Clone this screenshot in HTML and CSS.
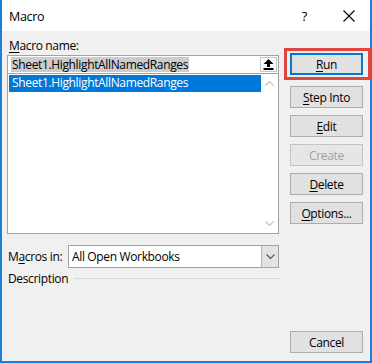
FILE: index.html
```html
<!DOCTYPE html>
<html lang="en">
<head>
    <meta charset="UTF-8">
    <meta name="viewport" content="width=device-width, initial-scale=1.0">
    <title>Macro</title>
    <link rel="stylesheet" href="styles.css">
</head>
<body>
    <div class="dialog">
        <div class="titlebar">
            <span class="title">Macro</span>
            <span class="help">?</span>
            <span class="close">
                <svg width="12" height="12" viewBox="0 0 12 12">
                    <path d="M0.5 0.5 L11.5 11.5 M11.5 0.5 L0.5 11.5" stroke="#000" stroke-width="1.1" fill="none"/>
                </svg>
            </span>
        </div>

        <div class="content">
            <div class="main">
                <div class="left">
                    <div class="label"><u>M</u>acro name:</div>

                    <div class="name-box">
                        <span class="name-sel">Sheet1.HighlightAllNamedRanges</span>
                        <span class="up-btn">
                            <svg width="11" height="11" viewBox="0 0 11 11">
                                <path d="M5.5 0 L10.5 5 L7 5 L7 8 L4 8 L4 5 L0.5 5 Z" fill="#000"/>
                                <rect x="0.5" y="9" width="10" height="2" fill="#000"/>
                            </svg>
                        </span>
                    </div>

                    <div class="list">
                        <div class="list-items">
                            <div class="item selected">Sheet1.HighlightAllNamedRanges</div>
                        </div>
                        <div class="scroll">
                            <svg width="9" height="6" viewBox="0 0 9 6">
                                <path d="M0.5 5.5 L4.5 1.5 L8.5 5.5" stroke="#c2c2c2" stroke-width="1.2" fill="none"/>
                            </svg>
                            <svg width="9" height="6" viewBox="0 0 9 6">
                                <path d="M0.5 0.5 L4.5 4.5 L8.5 0.5" stroke="#c2c2c2" stroke-width="1.2" fill="none"/>
                            </svg>
                        </div>
                    </div>

                    <div class="macros-in">
                        <span class="label">M<u>a</u>cros in:</span>
                        <div class="combo">
                            <span class="combo-text">All Open Workbooks</span>
                            <span class="drop">
                                <svg width="9" height="6" viewBox="0 0 9 6">
                                    <path d="M0.5 0.5 L4.5 4.5 L8.5 0.5" stroke="#555" stroke-width="1.1" fill="none"/>
                                </svg>
                            </span>
                        </div>
                    </div>

                    <div class="desc">
                        <span class="label">Description</span>
                        <span class="rule"></span>
                    </div>
                </div>

                <div class="buttons">
                    <div class="run-wrap">
                        <button class="btn btn-default"><u>R</u>un</button>
                        <span class="highlight"></span>
                    </div>
                    <button class="btn btn-first"><u>S</u>tep Into</button>
                    <button class="btn"><u>E</u>dit</button>
                    <button class="btn" disabled>Create</button>
                    <button class="btn"><u>D</u>elete</button>
                    <button class="btn"><u>O</u>ptions...</button>
                </div>
            </div>

            <div class="footer">
                <button class="btn">Cancel</button>
            </div>
        </div>
    </div>
</body>
</html>
```

FILE: styles.css
```css
/* Reset básico */
* {
    margin: 0;
    padding: 0;
    box-sizing: border-box;
    font-family: 'Segoe UI', 'Open Sans', sans-serif;
    letter-spacing: -0.35px;
}

body {
    background-color: #ffffff;
}

u {
    text-decoration: underline;
    text-underline-offset: 2px;
}

.dialog {
    width: 372px;
    height: 363px;
    display: flex;
    flex-direction: column;
    border: 2px solid #1c7fd6;
    border-top: none;
    background-color: #f0f0f0;
    color: #000000;
    font-size: 12px;
}

/* Barra de título */
.titlebar {
    height: 31px;
    background-color: #ffffff;
    display: flex;
    align-items: center;
    padding-left: 7px;
    flex-shrink: 0;
}

.title {
    font-size: 12.5px;
    flex: 1;
    padding-top: 1px;
}

.help {
    font-size: 13px;
    margin-right: 36px;
}

.close {
    display: flex;
    margin-right: 15px;
}

/* Conteúdo */
.content {
    flex: 1;
    display: flex;
    flex-direction: column;
    padding: 7px 7px 8px 5px;
}

.main {
    flex: 1;
    display: flex;
    gap: 11px;
}

.left {
    width: 272px;
    display: flex;
    flex-direction: column;
}

.label {
    line-height: 15px;
    padding-left: 2px;
}

.name-box {
    margin-top: 2px;
    height: 19px;
    border: 1px solid #a2a2a2;
    background-color: #ffffff;
    display: flex;
    align-items: center;
    justify-content: space-between;
    padding: 0 1px 0 3px;
    position: relative;
    z-index: 1;
}

.name-sel {
    background-color: #cccccc;
    line-height: 15px;
    padding: 0 1px;
}

.up-btn {
    width: 17px;
    height: 15px;
    border: 1px solid #c4c4c4;
    background-color: #fbfbfb;
    display: flex;
    align-items: center;
    justify-content: center;
}

.list {
    margin-top: -1px;
    height: 161px;
    border: 1px solid #a2a2a2;
    background-color: #ffffff;
    display: flex;
}

.list-items {
    flex: 1;
    padding: 1px 0 0 1px;
}

.item {
    height: 17px;
    line-height: 16px;
    padding-left: 3px;
}

.item.selected {
    background-color: #0078d7;
    color: #ffffff;
}

.scroll {
    width: 17px;
    display: flex;
    flex-direction: column;
    justify-content: space-between;
    align-items: center;
    padding: 6px 0 6px;
}

.macros-in {
    margin-top: 11px;
    display: flex;
    align-items: center;
    justify-content: space-between;
}

.macros-in .label {
    padding-left: 1px;
}

.combo {
    width: 211px;
    height: 23px;
    border: 1px solid #a2a2a2;
    background-color: #ffffff;
    display: flex;
    align-items: center;
    justify-content: space-between;
}

.combo-text {
    padding-left: 3px;
}

.drop {
    width: 17px;
    height: 21px;
    background-color: #e3e3e3;
    border-left: 1px solid #b5b5b5;
    display: flex;
    align-items: center;
    justify-content: center;
}

.desc {
    margin-top: 3px;
    display: flex;
    align-items: center;
    gap: 6px;
}

.desc .label {
    padding-left: 1px;
}

.rule {
    flex: 1;
    height: 1px;
    background-color: #d8d8d8;
}

/* Botões */
.buttons {
    width: 73px;
    padding-top: 15px;
    display: flex;
    flex-direction: column;
    gap: 7px;
}

.run-wrap {
    position: relative;
    display: flex;
}

.highlight {
    position: absolute;
    left: -6px;
    top: -5px;
    right: -8px;
    bottom: -5px;
    border: 3px solid #e0463f;
}

.btn {
    width: 73px;
    height: 22px;
    background-color: #e1e1e1;
    border: 1px solid #adadad;
    font-size: 12px;
    color: #000000;
    cursor: pointer;
}

.btn-default {
    border: 2px solid #0078d7;
}

.btn-first {
    margin-top: 4px;
}

.btn:disabled {
    color: #a0a0a0;
    background-color: #e6e6e6;
    border-color: #c4c4c4;
    cursor: default;
}

.footer {
    display: flex;
    justify-content: flex-end;
}
```
